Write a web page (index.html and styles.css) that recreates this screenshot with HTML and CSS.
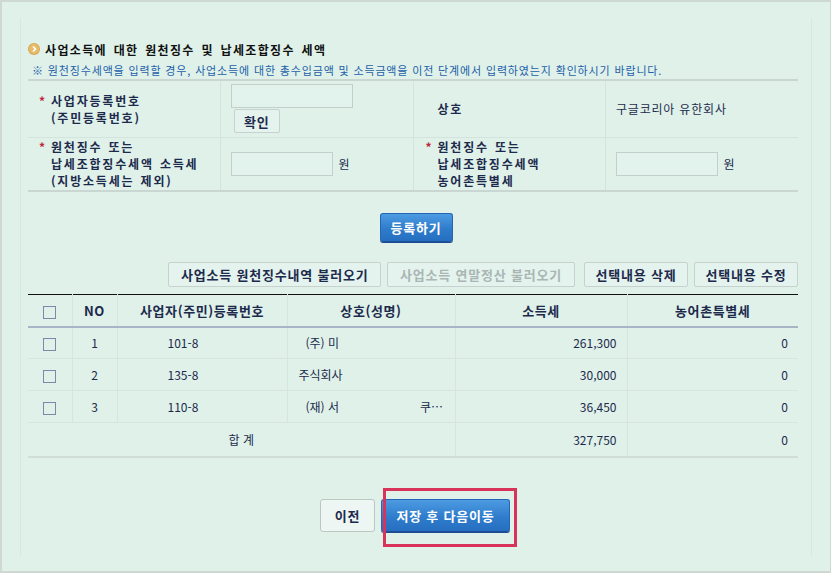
FILE: index.html
```html
<!DOCTYPE html>
<html lang="ko">
<head>
    <meta charset="UTF-8">
    <meta name="viewport" content="width=device-width, initial-scale=1.0">
    <title>사업소득 원천징수 세액</title>
    <link rel="stylesheet" href="styles.css">
</head>
<body>
    <div class="frame">
        <div class="panel">
            <h2 class="title">
                <svg class="bullet" width="12" height="12" viewBox="0 0 12 12">
                    <circle cx="6" cy="6" r="6" fill="#d9a64e"/>
                    <circle cx="6" cy="6" r="5" fill="#e6bc6c"/>
                    <path d="M5 3.5 L7.5 6 L5 8.5" fill="none" stroke="#fff" stroke-width="1.6"/>
                </svg>
                사업소득에 대한 원천징수 및 납세조합징수 세액
            </h2>
            <p class="note">※ 원천징수세액을 입력할 경우, 사업소득에 대한 총수입금액 및 소득금액을 이전 단계에서 입력하였는지 확인하시기 바랍니다.</p>

            <table class="form-table">
                <tr class="row-1">
                    <th><span class="req">*</span><span>사업자등록번호<br>(주민등록번호)</span></th>
                    <td>
                        <input type="text" class="input-wide">
                        <button class="btn btn-small">확인</button>
                    </td>
                    <th class="plain"><span class="req blank">*</span><span>상호</span></th>
                    <td class="value">구글코리아 유한회사</td>
                </tr>
                <tr class="row-2">
                    <th><span class="req">*</span><span>원천징수 또는<br>납세조합징수세액 소득세<br>(지방소득세는 제외)</span></th>
                    <td><input type="text" class="input-num"> <span class="unit">원</span></td>
                    <th><span class="req">*</span><span>원천징수 또는<br>납세조합징수세액<br>농어촌특별세</span></th>
                    <td><input type="text" class="input-num"> <span class="unit">원</span></td>
                </tr>
            </table>

            <div class="register">
                <button class="btn btn-blue">등록하기</button>
            </div>

            <div class="actions">
                <button class="btn btn-load">사업소득 원천징수내역 불러오기</button>
                <button class="btn" disabled>사업소득 연말정산 불러오기</button>
                <button class="btn btn-edit">선택내용 삭제</button>
                <button class="btn btn-edit">선택내용 수정</button>
            </div>

            <table class="list-table">
                <thead>
                    <tr>
                        <th class="col-check"><span class="check"></span></th>
                        <th class="col-no">NO</th>
                        <th class="col-reg">사업자(주민)등록번호</th>
                        <th class="col-name">상호(성명)</th>
                        <th class="col-tax">소득세</th>
                        <th class="col-rural">농어촌특별세</th>
                    </tr>
                </thead>
                <tbody>
                    <tr>
                        <td><span class="check"></span></td>
                        <td>1</td>
                        <td class="reg">101-8</td>
                        <td class="name">(주) 미</td>
                        <td class="num">261,300</td>
                        <td class="num">0</td>
                    </tr>
                    <tr>
                        <td><span class="check"></span></td>
                        <td>2</td>
                        <td class="reg">135-8</td>
                        <td class="name name-left">주식회사</td>
                        <td class="num">30,000</td>
                        <td class="num">0</td>
                    </tr>
                    <tr>
                        <td><span class="check"></span></td>
                        <td>3</td>
                        <td class="reg">110-8</td>
                        <td class="name"><span>(재) 서</span><span class="tail">쿠…</span></td>
                        <td class="num">36,450</td>
                        <td class="num">0</td>
                    </tr>
                    <tr class="total">
                        <td colspan="4">합 계</td>
                        <td class="num">327,750</td>
                        <td class="num">0</td>
                    </tr>
                </tbody>
            </table>

            <div class="bottom">
                <button class="btn btn-prev">이전</button>
                <span class="next-wrap">
                    <button class="btn btn-blue btn-next">저장 후 다음이동</button>
                    <span class="highlight"></span>
                </span>
            </div>
        </div>
    </div>
</body>
</html>
```

FILE: styles.css
```css
* {
    box-sizing: border-box;
}
body {
    margin: 0;
    background-color: #dff1e9;
    font-family: "Noto Sans CJK KR", "Noto Sans", sans-serif;
    font-size: 12px;
    color: #1d2a4c;
}
.frame {
    height: 573px;
    border: 1px solid #cfd9d4;
    border-width: 2px 1px 2px 2px;
    padding: 16px 18px 0 18px;
}
.panel {
    height: 538px;
    border-left: 1px solid #d6e9e1;
    border-right: 1px solid #d6e9e1;
    padding: 21px 13px 0 7px;
}
.title {
    display: flex;
    align-items: center;
    gap: 5px;
    margin: 0;
    height: 20px;
    font-size: 12px;
    font-weight: bold;
    color: #111;
    letter-spacing: 1.35px;
    word-spacing: 2px;
}
.note {
    margin: 2px 0 0 4px;
    height: 18px;
    line-height: 18px;
    font-size: 11px;
    color: #1d5fa8;
    letter-spacing: 0.85px;
    white-space: nowrap;
}

/* 입력 폼 */
.form-table {
    width: 100%;
    border-collapse: collapse;
    border-top: 2px solid #c9d6d1;
    border-bottom: 2px solid #c9d6d1;
}
.form-table th,
.form-table td {
    border-right: 1px solid #d3e4dd;
    vertical-align: middle;
    text-align: left;
    padding: 0;
}
.form-table td:last-child {
    border-right: none;
}
.form-table tr.row-1 {
    height: 57px;
    border-bottom: 1px solid #d3e4dd;
}
.form-table tr.row-2 {
    height: 54px;
}
.form-table th {
    width: 192px;
    font-size: 12px;
    font-weight: bold;
    line-height: 17px;
    letter-spacing: 1.8px;
    word-spacing: 1px;
}
.form-table th > span {
    display: inline-block;
    vertical-align: top;
}
.form-table th:first-child {
    padding-left: 11px;
}
.form-table th:nth-child(3) {
    padding-left: 12px;
}
.form-table td {
    width: 192px;
    padding-left: 10px;
}
.req {
    width: 12px;
    letter-spacing: 0;
    color: #c0263a;
    font-weight: bold;
}
.req.blank {
    visibility: hidden;
}
.value {
    letter-spacing: 0.8px;
}
input[type="text"] {
    display: block;
    height: 24px;
    border: 1px solid #c3cfcb;
    background-color: #e2f2ec;
    margin: 0;
}
.input-wide {
    width: 122px;
}
.input-num {
    display: inline-block !important;
    vertical-align: middle;
    width: 102px;
}
.unit {
    vertical-align: middle;
    margin-left: 2px;
}

/* 버튼 */
.btn {
    font-family: inherit;
    font-size: 13px;
    font-weight: bold;
    color: #1d2a4c;
    background-color: #e4f3ed;
    border: 1px solid #c7d1cd;
    border-radius: 2px;
    height: 25px;
    padding: 0 12px;
    letter-spacing: 0.8px;
    cursor: pointer;
}
.btn:disabled {
    color: #aab6b4;
    cursor: default;
}
.btn-small {
    display: block;
    margin: 1px 0 0 3px;
    height: 24px;
    padding: 0 9px;
}
.btn-blue {
    color: #fff;
    border: 1px solid #2565b3;
    border-bottom-color: #1b4f99;
    background: linear-gradient(#4d9be2, #2f7ccc 55%, #266fc0);
    border-radius: 3px;
    box-shadow: 0 1px 0 #1c4b8f;
}
.register {
    display: flex;
    justify-content: center;
    margin-top: 21px;
    padding-left: 6px;
}
.register .btn-blue {
    height: 29px;
    width: 73px;
    padding: 0;
}
.actions {
    display: flex;
    justify-content: flex-end;
    gap: 6px;
    margin-top: 20px;
}
.actions .btn:nth-child(2) {
    margin-right: 3px;
}
.actions .btn-load {
    padding: 0 11.5px;
}
.actions .btn-edit {
    padding: 0 10.5px;
}

/* 목록 */
.list-table {
    width: 100%;
    margin-top: 7px;
    border-collapse: collapse;
    border-top: 1px solid #111;
    border-bottom: 2px solid #d0ddd8;
    table-layout: fixed;
}
.list-table th {
    height: 32px;
    font-size: 13px;
    font-weight: bold;
    border-bottom: 2px solid #a7b5c7;
    border-right: 1px solid #d6e6df;
    letter-spacing: 0.6px;
}
.list-table th:last-child,
.list-table td:last-child {
    border-right: none;
}
.list-table td {
    height: 32px;
    text-align: center;
    border-bottom: 1px solid #d6e6df;
    border-right: 1px solid #d6e6df;
    padding: 0;
}
.col-check { width: 44px; }
.col-no { width: 45px; }
.col-reg { width: 170px; }
.col-name { width: 168px; }
.col-tax { width: 172px; }
.check {
    display: inline-block;
    width: 13px;
    height: 13px;
    border: 1px solid #7b88a6;
    vertical-align: middle;
}
.list-table td.reg {
    text-align: left;
    padding-left: 50px;
}
.list-table td.name {
    text-align: left;
    padding-left: 18px;
}
.list-table td.name-left {
    padding-left: 11px;
}
.tail {
    margin-left: 81px;
}
.list-table td.num {
    text-align: right;
    padding-right: 10px;
}
.list-table tr.total td {
    height: 34px;
    border-bottom: none;
}

/* 하단 */
.bottom {
    display: flex;
    justify-content: center;
    gap: 6px;
    margin-top: 41px;
    padding-left: 4px;
}
.bottom .btn {
    height: 33px;
}
.btn-prev {
    width: 55px;
    padding: 0;
    background-color: #edf6f2;
    border-color: #bcc7c3;
    border-radius: 3px;
}
.next-wrap {
    position: relative;
}
.btn-next {
    width: 129px;
    padding: 0;
}
.highlight {
    position: absolute;
    left: 2px;
    top: -11px;
    width: 134px;
    height: 59px;
    border: 3px solid #d8345a;
}
```
